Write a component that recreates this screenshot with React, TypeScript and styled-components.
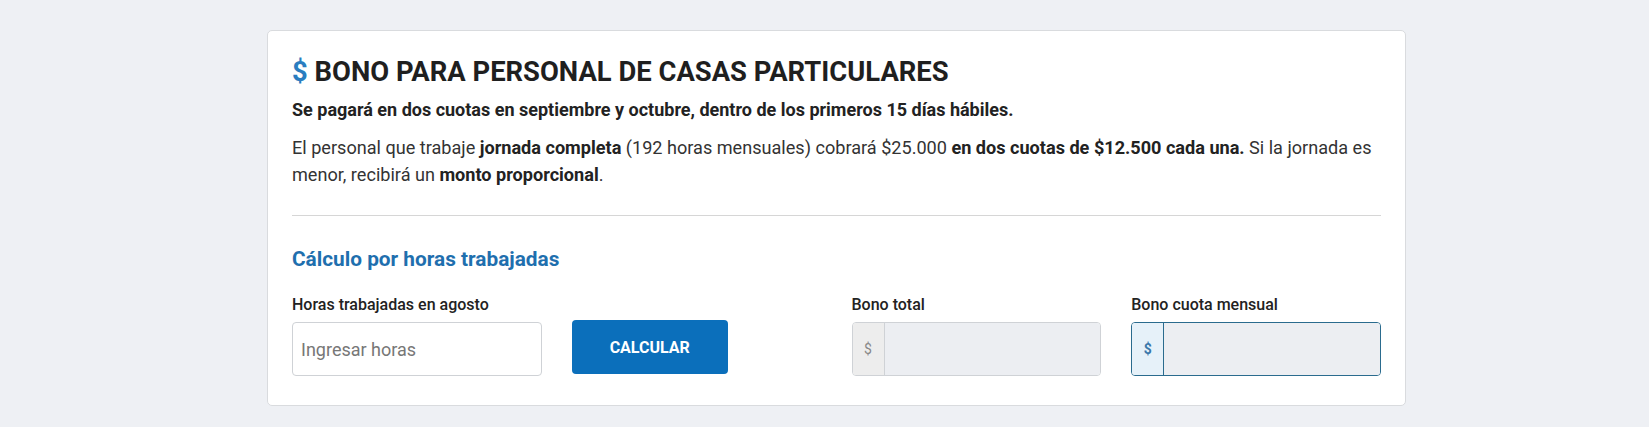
import React from 'react';
import styled, { createGlobalStyle } from 'styled-components';

const GlobalStyle = createGlobalStyle`
    body {
        margin: 0;
        background: #eef0f4;
        font-family: Roboto, 'Liberation Sans', sans-serif;
        color: #333;
    }
    * {
        box-sizing: border-box;
    }
`;

const Page = styled.div`
    padding: 30px 0 0 267px;
    min-height: 427px;
`;

const Card = styled.section`
    width: 1139px;
    padding: 24px 24px 29px;
    background: #fff;
    border: 1px solid #d9dbde;
    border-radius: 5px;
`;

const Title = styled.h1`
    margin: 0;
    font-size: 27.4px;
    line-height: 34px;
    font-weight: 700;
    color: #1f1f1f;
`;

const Dollar = styled.span`
    color: #2a7dc0;
`;

const Lead = styled.p`
    margin: 9px 0 0;
    font-size: 18px;
    line-height: 24px;
    font-weight: 700;
    color: #222;
`;

const Body = styled.p`
    margin: 12px 0 0;
    font-size: 18.1px;
    line-height: 27px;
    color: #333;

    b {
        font-weight: 700;
        color: #222;
    }
`;

const Divider = styled.hr`
    margin: 27px 0 0;
    border: none;
    border-top: 1px solid #d6d6d6;
`;

const SectionTitle = styled.h2`
    margin: 30px 0 0;
    font-size: 20.8px;
    line-height: 26px;
    font-weight: 700;
    color: #1f6fae;
`;

const FieldGrid = styled.div`
    display: grid;
    grid-template-columns: repeat(4, minmax(0, 1fr));
    column-gap: 30px;
    align-items: end;
    margin-top: 23px;
`;

const Field = styled.div`
    display: flex;
    flex-direction: column;
    gap: 7px;
`;

const Label = styled.label`
    font-size: 16px;
    line-height: 20px;
    font-weight: 500;
    color: #222;
`;

const HoursInput = styled.input`
    height: 54px;
    width: 100%;
    padding: 0 8px;
    border: 1px solid #cfd2d6;
    border-radius: 4px;
    font-family: inherit;
    font-size: 18px;
    color: #333;

    &::placeholder {
        color: #777;
    }

    &:focus {
        outline: none;
    }
`;

const CalcButton = styled.button`
    width: 156px;
    height: 54px;
    margin-bottom: 2px;
    border: none;
    border-radius: 4px;
    background: #0b6fbb;
    color: #fff;
    font-family: inherit;
    font-size: 16px;
    font-weight: 700;
    cursor: pointer;
`;

const InputGroup = styled.div<{ $active?: boolean }>`
    display: flex;
    height: 54px;
    border: 1px solid ${(p) => (p.$active ? '#2a6b8e' : '#cfd2d6')};
    border-radius: 4px;
    overflow: hidden;
`;

const Addon = styled.span<{ $active?: boolean }>`
    display: flex;
    align-items: center;
    justify-content: center;
    width: 32px;
    flex-shrink: 0;
    border-right: 1px solid ${(p) => (p.$active ? '#2a6b8e' : '#cfd2d6')};
    background: ${(p) => (p.$active ? '#e6f1f9' : '#ededed')};
    color: ${(p) => (p.$active ? '#3977aa' : '#888')};
    font-size: 14px;
    font-weight: ${(p) => (p.$active ? 700 : 400)};
`;

const ResultInput = styled.input`
    flex: 1;
    min-width: 0;
    border: none;
    background: #eceef2;
    font-family: inherit;
    font-size: 18px;
    padding: 0 10px;

    &:focus {
        outline: none;
    }
`;

const App = (): JSX.Element => {
    return (
        <Page>
            <GlobalStyle />
            <Card>
                <Title>
                    <Dollar>$</Dollar> BONO PARA PERSONAL DE CASAS PARTICULARES
                </Title>
                <Lead>Se pagará en dos cuotas en septiembre y octubre, dentro de los primeros 15 días hábiles.</Lead>
                <Body>
                    El personal que trabaje <b>jornada completa</b> (192 horas mensuales) cobrará $25.000{' '}
                    <b>en dos cuotas de $12.500 cada una.</b> Si la jornada es menor, recibirá un{' '}
                    <b>monto proporcional</b>.
                </Body>
                <Divider />
                <SectionTitle>Cálculo por horas trabajadas</SectionTitle>
                <FieldGrid>
                    <Field>
                        <Label htmlFor="horas">Horas trabajadas en agosto</Label>
                        <HoursInput id="horas" placeholder="Ingresar horas" />
                    </Field>
                    <div>
                        <CalcButton type="button">CALCULAR</CalcButton>
                    </div>
                    <Field>
                        <Label>Bono total</Label>
                        <InputGroup>
                            <Addon>$</Addon>
                            <ResultInput readOnly />
                        </InputGroup>
                    </Field>
                    <Field>
                        <Label>Bono cuota mensual</Label>
                        <InputGroup $active>
                            <Addon $active>$</Addon>
                            <ResultInput readOnly />
                        </InputGroup>
                    </Field>
                </FieldGrid>
            </Card>
        </Page>
    );
};

export default App;
